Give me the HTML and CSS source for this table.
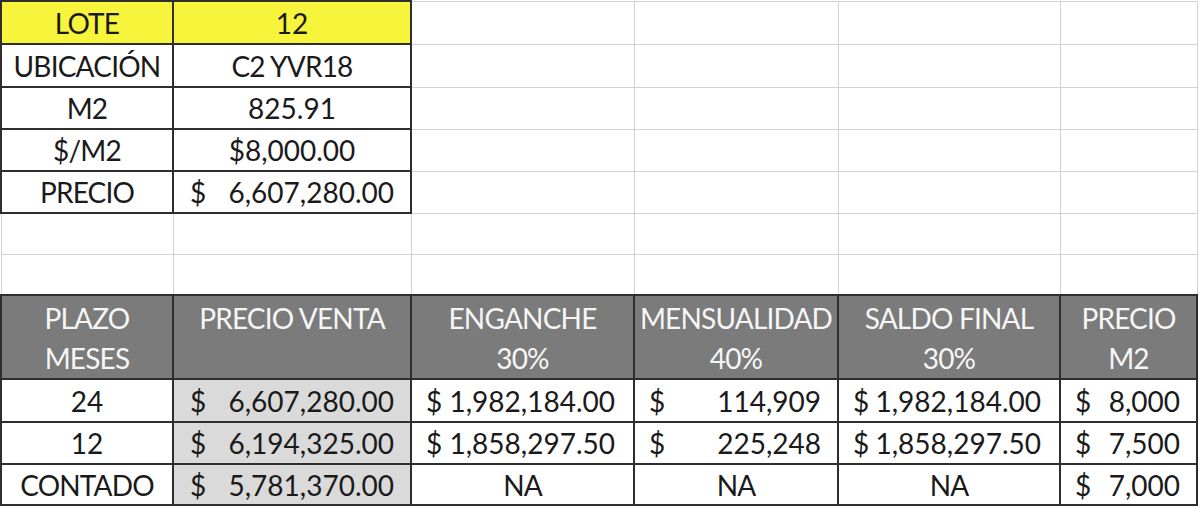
FILE: index.html
```html
<!DOCTYPE html>
<html lang="es">
<head>
<meta charset="utf-8">
<title>Lote 12</title>
<link rel="stylesheet" href="styles.css">
</head>
<body>
<table class="sheet">
  <colgroup>
    <col class="c1"><col class="c2"><col class="c3"><col class="c4"><col class="c5"><col class="c6">
  </colgroup>
  <tbody>
    <tr class="r43">
      <td class="b yel t">LOTE</td><td class="b yel">12</td>
      <td class="g"></td><td class="g"></td><td class="g"></td><td class="g"></td>
    </tr>
    <tr class="r43">
      <td class="b t">UBICACIÓN</td><td class="b t">C2 YVR18</td>
      <td class="g"></td><td class="g"></td><td class="g"></td><td class="g"></td>
    </tr>
    <tr class="r42">
      <td class="b t">M2</td><td class="b">825.91</td>
      <td class="g"></td><td class="g"></td><td class="g"></td><td class="g"></td>
    </tr>
    <tr class="r42">
      <td class="b t">$/M2</td><td class="b">$8,000.00</td>
      <td class="g"></td><td class="g"></td><td class="g"></td><td class="g"></td>
    </tr>
    <tr class="r42">
      <td class="b t">PRECIO</td><td class="b"><div class="acc p1"><span>$</span><span>6,607,280.00</span></div></td>
      <td class="g"></td><td class="g"></td><td class="g"></td><td class="g"></td>
    </tr>
    <tr class="r41">
      <td class="g"></td><td class="g"></td><td class="g"></td><td class="g"></td><td class="g"></td><td class="g"></td>
    </tr>
    <tr class="r41">
      <td class="g"></td><td class="g"></td><td class="g"></td><td class="g"></td><td class="g"></td><td class="g"></td>
    </tr>
    <tr class="head">
      <td class="b h t">PLAZO<br>MESES</td>
      <td class="b h t">PRECIO VENTA</td>
      <td class="b h t">ENGANCHE<br>30%</td>
      <td class="b h t">MENSUALIDAD<br>40%</td>
      <td class="b h t">SALDO FINAL<br>30%</td>
      <td class="b h t">PRECIO<br>M2</td>
    </tr>
    <tr class="r43">
      <td class="b">24</td>
      <td class="b gr"><div class="acc p1"><span>$</span><span>6,607,280.00</span></div></td>
      <td class="b"><div class="acc p2"><span>$</span><span>1,982,184.00</span></div></td>
      <td class="b"><div class="acc p3"><span>$</span><span>114,909</span></div></td>
      <td class="b"><div class="acc p2"><span>$</span><span>1,982,184.00</span></div></td>
      <td class="b"><div class="acc p3"><span>$</span><span>8,000</span></div></td>
    </tr>
    <tr class="r42">
      <td class="b">12</td>
      <td class="b gr"><div class="acc p1"><span>$</span><span>6,194,325.00</span></div></td>
      <td class="b"><div class="acc p2"><span>$</span><span>1,858,297.50</span></div></td>
      <td class="b"><div class="acc p3"><span>$</span><span>225,248</span></div></td>
      <td class="b"><div class="acc p2"><span>$</span><span>1,858,297.50</span></div></td>
      <td class="b"><div class="acc p3"><span>$</span><span>7,500</span></div></td>
    </tr>
    <tr class="r41">
      <td class="b t">CONTADO</td>
      <td class="b gr"><div class="acc p1"><span>$</span><span>5,781,370.00</span></div></td>
      <td class="b t">NA</td>
      <td class="b t">NA</td>
      <td class="b t">NA</td>
      <td class="b"><div class="acc p3"><span>$</span><span>7,000</span></div></td>
    </tr>
  </tbody>
</table>
</body>
</html>
```

FILE: styles.css
```css
html, body {
  margin: 0;
  padding: 0;
  background: #ffffff;
}

body {
  font-family: Lato, "Open Sans", "Liberation Sans", sans-serif;
  font-size: 28px;
  color: #1a1a1a;
}

.sheet {
  border-collapse: collapse;
  table-layout: fixed;
  width: 1196px;
  margin: 0;
}

.c1 { width: 172px; }
.c2 { width: 238px; }
.c3 { width: 223px; }
.c4 { width: 204px; }
.c5 { width: 222px; }
.c6 { width: 137px; }

.sheet td {
  padding: 0;
  text-align: center;
  vertical-align: middle;
  white-space: nowrap;
  overflow: hidden;
}

.sheet td.t {
  letter-spacing: -0.8px;
}

.r43 { height: 43px; }
.r42 { height: 42px; }
.r41 { height: 41px; }
.head { height: 83px; }

.g {
  border: 1px solid #d2d2d2;
}

.b {
  border: 2px solid #2e2e2e;
}

.yel {
  background: #f7f43c;
}

.gr {
  background: #dadada;
}

.sheet td.h {
  background: #7b7b7b;
  color: #f6f6f6;
  vertical-align: top;
  line-height: 40px;
  padding-top: 2px;
}

.acc {
  display: flex;
  justify-content: space-between;
  align-items: center;
}

.p1 { padding: 0 16px 0 16px; }
.p2 { padding: 0 18px 0 14px; }
.p3 { padding: 0 16px 0 14px; }
```
